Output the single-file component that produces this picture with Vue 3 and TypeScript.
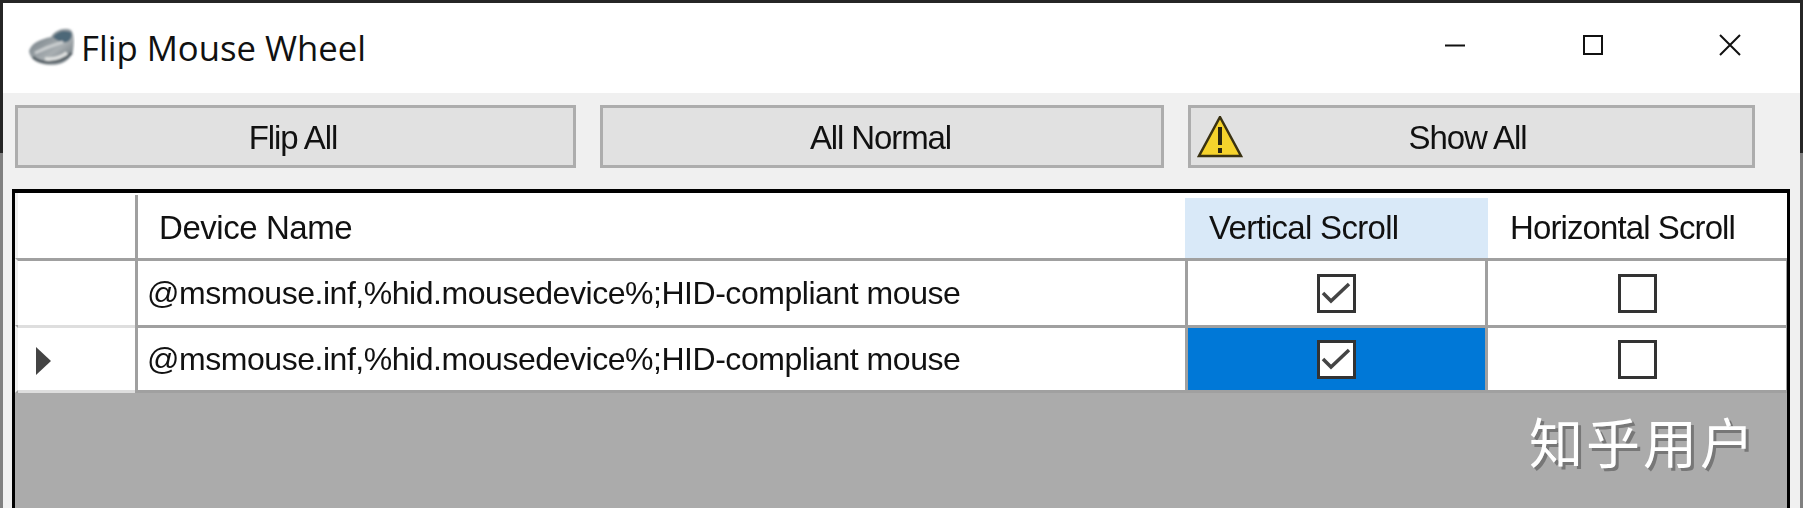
<script setup lang="ts">
const deviceName = '@msmouse.inf,%hid.mousedevice%;HID-compliant mouse'

const rows = [
  { name: deviceName, vertical: true, horizontal: false, current: false },
  { name: deviceName, vertical: true, horizontal: false, current: true },
]
</script>

<template>
  <div class="screen">
    <div class="window">
      <header class="titlebar">
        <svg class="app-icon" viewBox="0 0 48 40" width="48" height="40">
          <defs>
            <filter id="soft"><feGaussianBlur stdDeviation="0.9" /></filter>
            <linearGradient id="body" x1="0" y1="0" x2="1" y2="1">
              <stop offset="0" stop-color="#69757d" />
              <stop offset="0.6" stop-color="#a9afb2" />
              <stop offset="1" stop-color="#5b666d" />
            </linearGradient>
          </defs>
          <g filter="url(#soft)">
            <path d="M2 24C4 16 14 12 24 10C28 3 38 0 44 3C48 8 47 16 46 24C44 32 36 38 24 38C12 38 3 33 2 24Z" fill="url(#body)" />
            <path d="M26 10C30 4 38 3 44 5C46 9 44 13 40 15C35 16 30 14 26 10Z" fill="#4d6878" />
            <path d="M8 26C16 22 26 18 36 15" stroke="#c9cdcf" stroke-width="3" fill="none" />
            <path d="M18 32C26 33 34 31 40 26" stroke="#dfe1e0" stroke-width="4" fill="none" />
            <path d="M6 30C12 36 30 39 45 26" stroke="#4f5a61" stroke-width="2.5" fill="none" />
          </g>
        </svg>
        <span class="title">Flip Mouse Wheel</span>
        <div class="caption">
          <span class="caption-btn">
            <svg width="22" height="22" viewBox="0 0 22 22"><path d="M1 11.5H21" stroke="#111" stroke-width="2" /></svg>
          </span>
          <span class="caption-btn">
            <svg width="22" height="22" viewBox="0 0 22 22"><rect x="2" y="2" width="18" height="18" fill="none" stroke="#111" stroke-width="2" /></svg>
          </span>
          <span class="caption-btn">
            <svg width="22" height="22" viewBox="0 0 22 22"><path d="M1 1L21 21M21 1L1 21" stroke="#111" stroke-width="2" /></svg>
          </span>
        </div>
      </header>

      <div class="toolbar">
        <button class="btn flip"><span class="soft">Flip All</span></button>
        <button class="btn normal"><span class="soft">All Normal</span></button>
        <button class="btn show">
          <svg class="warn" viewBox="0 0 46 43" width="46" height="43">
            <path d="M23 1L44 40H2Z" fill="#f6d32c" stroke="#3a3212" stroke-width="2.5" stroke-linejoin="miter" />
            <path d="M23 11V29M23 32V37" stroke="#2a2510" stroke-width="4" />
          </svg>
          <span class="soft">Show All</span>
        </button>
      </div>

      <div class="grid">
        <div class="head">
          <div class="head-corner"></div>
          <div class="head-cell name"><span class="soft">Device Name</span></div>
          <div class="head-cell vertical"><span class="soft">Vertical Scroll</span></div>
          <div class="head-cell horizontal"><span class="soft">Horizontal Scroll</span></div>
        </div>
        <div v-for="(row, i) in rows" :key="i" class="row" :class="{ current: row.current }">
          <div class="row-header">
            <svg v-if="row.current" class="arrow" width="16" height="28" viewBox="0 0 16 28"><path d="M0 0L15 14L0 28Z" fill="#444" /></svg>
          </div>
          <div class="cell text"><span class="soft">{{ row.name }}</span></div>
          <div class="cell check" :class="{ selected: row.current }">
            <span class="box">
              <svg v-if="row.vertical" width="33" height="33" viewBox="0 0 33 33"><path d="M3 16L11 24L29 7" fill="none" stroke="#444" stroke-width="3.5" /></svg>
            </span>
          </div>
          <div class="cell check">
            <span class="box">
              <svg v-if="row.horizontal" width="33" height="33" viewBox="0 0 33 33"><path d="M3 16L11 24L29 7" fill="none" stroke="#444" stroke-width="3.5" /></svg>
            </span>
          </div>
        </div>
        <div class="watermark">知乎用户</div>
      </div>
    </div>
  </div>
</template>

<style>
html, body {
  margin: 0;
  overflow: hidden;
}
</style>

<style scoped>
.screen {
  width: 1803px;
  height: 508px;
  box-sizing: border-box;
  padding: 3px 3px 0 3px;
  background: linear-gradient(#262626 0 153px, #808080 153px);
  font-family: "Liberation Sans", Arial, sans-serif;
}
.window {
  height: 505px;
  display: flex;
  flex-direction: column;
  background: #f0f0f0;
}
.titlebar {
  height: 90px;
  flex-shrink: 0;
  display: flex;
  align-items: center;
  background: #fff;
  padding-left: 24px;
}
.app-icon {
  margin-top: -3px;
  flex-shrink: 0;
}
.title {
  margin-left: 6px;
  margin-top: -2px;
  font-family: "Open Sans", "Noto Sans", sans-serif;
  font-size: 34.7px;
  color: #111;
  white-space: nowrap;
}
.caption {
  margin-left: auto;
  margin-right: 1px;
  display: flex;
  margin-top: -7px;
}
.caption-btn {
  width: 137.5px;
  display: flex;
  justify-content: center;
}
.soft {
  filter: blur(0.4px);
}
.toolbar {
  display: flex;
  gap: 24px;
  padding: 12px 0 0 12px;
  flex-shrink: 0;
}
.btn {
  height: 63px;
  box-sizing: border-box;
  border: 3px solid #adadad;
  background: #e1e1e1;
  padding: 2px 0 0;
  font-family: inherit;
  font-size: 33px;
  letter-spacing: -1.1px;
  color: #111;
  position: relative;
}
.btn .soft {
  display: inline-block;
}
.flip { width: 561px; padding-right: 5px; }
.normal { width: 564px; padding-right: 3px; }
.show { width: 567px; padding-right: 8px; }
.warn {
  position: absolute;
  left: 6px;
  top: 8px;
}
.grid {
  margin: 21px 0 0 9px;
  width: 1778px;
  flex: 1;
  box-sizing: border-box;
  border: solid #000;
  border-width: 4px 3px 0 3px;
  background: #ababab;
  position: relative;
  overflow: hidden;
}
.head {
  display: grid;
  grid-template-columns: 120px 1047px 303px 1fr;
  height: 65px;
  box-sizing: border-box;
  padding-top: 5px;
  border-left: 3px solid #f0f0f0;
  background: #fff;
  font-size: 33px;
  letter-spacing: -0.7px;
  color: #111;
}
.head-corner {
  border-right: 3px solid #a0a0a0;
  margin-top: -3px;
}
.head-cell {
  display: flex;
  align-items: center;
  white-space: nowrap;
}
.head-cell .soft {
  display: inline-block;
}
.head-cell.name {
  padding-left: 21px;
  letter-spacing: -0.45px;
}
.head-cell.vertical {
  background: #d9e9f8;
  padding-left: 24px;
}
.head-cell.horizontal {
  padding-left: 22px;
  letter-spacing: -0.9px;
}
.row {
  display: grid;
  grid-template-columns: 117px 1047px 297px 1fr;
  column-gap: 3px;
  height: 67px;
  box-sizing: border-box;
  border-top: 3px solid #a0a0a0;
  border-left: 3px solid #f0f0f0;
  padding-right: 1px;
  background: #a0a0a0;
}
.row.current {
  height: 68px;
  border-bottom: 3px solid #a0a0a0;
}
.row-header {
  background: #fff;
  display: flex;
  align-items: center;
  padding-left: 18px;
}
.arrow {
  margin-top: 4px;
}
.row.current .row-header {
  box-shadow: 0 -3px 0 #dedede, 0 3px 0 #dedede;
}
.cell {
  background: #fff;
  display: flex;
  align-items: center;
}
.cell.text {
  padding-left: 9px;
  font-size: 32px;
  letter-spacing: -0.46px;
  color: #111;
  white-space: nowrap;
}
.cell.text .soft {
  display: inline-block;
}
.check {
  justify-content: center;
}
.check.selected {
  background: #0078d7;
}
.box {
  width: 39px;
  height: 39px;
  box-sizing: border-box;
  border: 3px solid #333;
  background: #fff;
  display: block;
}
.box svg {
  display: block;
}
.watermark {
  position: absolute;
  left: 1514px;
  top: 218px;
  font-family: "Noto Sans CJK SC", sans-serif;
  font-size: 54px;
  line-height: 60px;
  letter-spacing: 3px;
  color: #fff;
  text-shadow: 3px 3px 0 #777;
  white-space: nowrap;
}
</style>
